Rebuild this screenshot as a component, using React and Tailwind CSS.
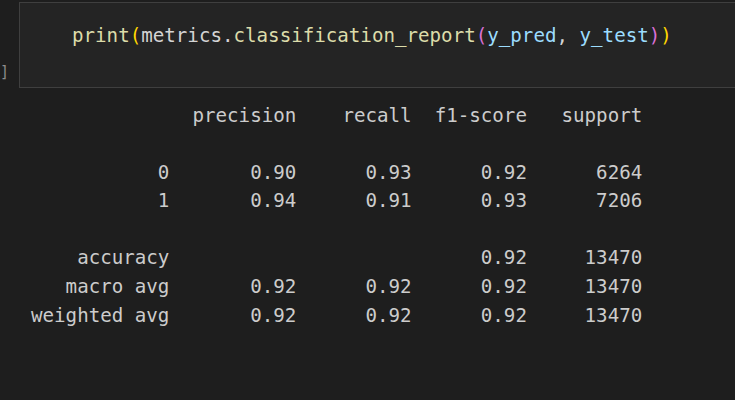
import React from "react";

const mono = { fontFamily: '"DejaVu Sans Mono", "Liberation Mono", monospace' };

const report = `              precision    recall  f1-score   support

           0       0.90      0.93      0.92      6264
           1       0.94      0.91      0.93      7206

    accuracy                           0.92     13470
   macro avg       0.92      0.92      0.92     13470
weighted avg       0.92      0.92      0.92     13470
`;

export default function App() {
    return (
        <div className="w-full h-[400px] bg-[#1e1e1e] overflow-hidden" style={mono}>
            {/* code cell */}
            <div className="flex pt-[2px]">
                <div className="w-[19px] shrink-0 pt-[60px] text-[15px] leading-[20px] text-[#8c8c8c]">
                    ]
                </div>
                <div className="flex-1 h-[86px] bg-[#242424] border border-r-0 border-[#3f3f3f] pl-[52px] pt-[19px]">
                    <pre className="text-[19.17px] leading-[28.6px] text-[#d4d4d4] m-0" style={mono}>
                        <span className="text-[#dcdcaa]">print</span>
                        <span className="text-[#ffd700]">(</span>
                        <span className="text-[#d4d4d4]">metrics</span>
                        <span className="text-[#d4d4d4]">.</span>
                        <span className="text-[#dcdcaa]">classification_report</span>
                        <span className="text-[#da70d6]">(</span>
                        <span className="text-[#9cdcfe]">y_pred</span>
                        <span className="text-[#d4d4d4]">, </span>
                        <span className="text-[#9cdcfe]">y_test</span>
                        <span className="text-[#da70d6]">)</span>
                        <span className="text-[#ffd700]">)</span>
                    </pre>
                </div>
            </div>

            {/* output */}
            <pre
                className="ml-[31px] mt-[13.5px] text-[19.17px] leading-[28.6px] text-[#cccccc]"
                style={mono}
            >
                {report}
            </pre>
        </div>
    );
}
